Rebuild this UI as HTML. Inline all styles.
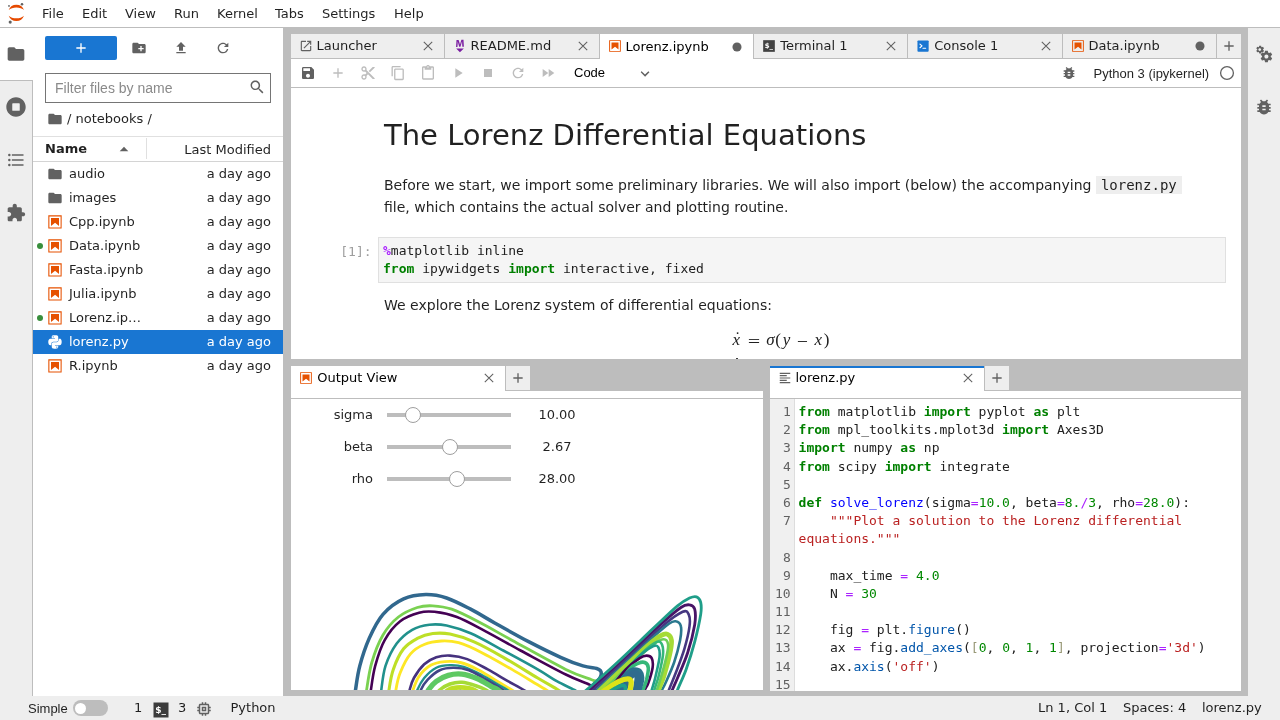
<!DOCTYPE html>
<html lang="en">
<head>
<meta charset="utf-8">
<title>JupyterLab</title>
<style>
*{box-sizing:border-box;margin:0;padding:0}
html,body{width:1280px;height:720px;overflow:hidden;background:#fff}
body{font-family:"DejaVu Sans","Liberation Sans",sans-serif;font-size:13px;color:rgba(0,0,0,.87);position:relative}
.abs{position:absolute}
.arial{font-family:"Liberation Sans",sans-serif}
.mono{font-family:"DejaVu Sans Mono","Liberation Mono",monospace}
svg{display:block;position:absolute}
/* menu */
#menubar{left:0;top:0;width:1280px;height:28px;background:#fff;border-bottom:1px solid #bdbdbd}
#menubar span{position:absolute;top:0;line-height:27px;font-size:13px;white-space:nowrap}
/* sidebars */
#lside{left:0;top:28px;width:33px;height:668px;background:#eee;border-right:1px solid #bdbdbd}
#lside .act{position:absolute;left:0;top:0;width:33px;height:53px;background:#fff;border-bottom:1px solid #bdbdbd}
#rside{left:1247px;top:28px;width:33px;height:668px;background:#eee;border-left:1px solid #bdbdbd}
/* file browser */
#fb{left:33px;top:28px;width:250px;height:668px;background:#fff}
.row{position:absolute;left:0;width:250px;height:24px;line-height:24px;font-size:13px;white-space:nowrap}
.row .nm{position:absolute;left:36px;top:0}
.row .md{position:absolute;right:12px;top:0}
.row.sel{background:#1976d2;color:#fff}
.dot{position:absolute;left:4.300px;top:9px;width:6px;height:6px;border-radius:50%;background:#388e3c}
/* dock */
#dock{left:283px;top:28px;width:964px;height:668px;background:#bdbdbd}
.panel{background:#fff}
.tabbar{background:#bdbdbd}
.tab{position:absolute;top:0;height:24px;background:#eee;border-left:1px solid #bdbdbd;border-right:1px solid #bdbdbd;line-height:22px;font-size:13px;white-space:nowrap}
.tab.cur{background:#fff;height:25px;color:#000}
.tab .lbl{position:absolute;left:25.5px;top:1px}
.tab.cur .lbl{top:2px}
.mdp{font-size:14px;line-height:22px;color:rgba(0,0,0,.87)}
.mdp code{font-family:"DejaVu Sans Mono","Liberation Mono",monospace;font-size:14px;background:#eee;padding:1px 5px}
.ed{font-size:13px;line-height:18.2px;color:#212121}
.gut{left:0;top:0;width:25px;height:292px;background:#f0f0f0;border-right:1px solid #ddd;padding:4px 3.300px 0 0;text-align:right;color:#616161}
.code{left:28.600px;top:0;padding-top:4px;white-space:pre}
.k{color:#008000}.o{color:#a2f}.n{color:#080}.s{color:#ba2121}.p{color:#05a}.d{color:#00f}.b{color:#997}
/* status */
#status{left:0;top:696px;width:1280px;height:24px;background:#eee}
#status span{position:absolute;top:0;line-height:23px;font-size:13px;white-space:nowrap}
</style>
</head>
<body>
<div id="root" class="abs" style="left:0;top:0;width:1280px;height:720px;will-change:transform">
<div id="menubar" class="abs">
<svg style="left:0;top:0" width="34" height="28" viewBox="0 0 34 28"><g fill="#e64a00"><path d="M8.700 10A8.200 8.200 0 0 1 24 10A9 5.300 0 0 0 8.700 10z"/><path d="M8.700 15.800A8.200 8.200 0 0 0 24 15.800A9 5.300 0 0 1 8.700 15.800z"/></g><g fill="#616161"><circle cx="22" cy="4.200" r="1.250"/><circle cx="9" cy="5.900" r=".9"/><circle cx="10.200" cy="22.100" r="1.550"/></g></svg>
<span style="left:42px">File</span><span style="left:82px">Edit</span><span style="left:125px">View</span><span style="left:174px">Run</span><span style="left:217px">Kernel</span><span style="left:275px">Tabs</span><span style="left:322px">Settings</span><span style="left:394px">Help</span>
</div>
<div id="lside" class="abs"><div class="act"></div>
<svg style="left:6px;top:16px" width="20" height="20" viewBox="0 0 24 24" fill="#616161"><path d="M10 4H4c-1.100 0-1.990.9-1.990 2L2 18c0 1.100.9 2 2 2h16c1.100 0 2-.9 2-2V8c0-1.100-.9-2-2-2h-8l-2-2z"/></svg>
<svg style="left:6px;top:69px" width="20" height="20" viewBox="0 0 512 512" fill="#616161"><path d="M256 8C119 8 8 119 8 256s111 248 248 248 248-111 248-248S393 8 256 8zm96 328c0 8.800-7.200 16-16 16H176c-8.800 0-16-7.200-16-16V176c0-8.800 7.200-16 16-16h160c8.800 0 16 7.200 16 16v160z"/></svg>
<svg style="left:6px;top:122px" width="20" height="20" viewBox="0 0 24 24" fill="#616161"><path d="M7 5h14v2H7V5m0 8v-2h14v2H7M4 4.500A1.500 1.500 0 0 1 5.500 6 1.500 1.500 0 0 1 4 7.500 1.500 1.500 0 0 1 2.500 6 1.500 1.500 0 0 1 4 4.500m0 6A1.500 1.500 0 0 1 5.500 12 1.500 1.500 0 0 1 4 13.500 1.500 1.500 0 0 1 2.500 12 1.500 1.500 0 0 1 4 10.500M7 19v-2h14v2H7m-3-2.500A1.500 1.500 0 0 1 5.500 18 1.500 1.500 0 0 1 4 19.500 1.500 1.500 0 0 1 2.500 18 1.500 1.500 0 0 1 4 16.500z"/></svg>
<svg style="left:6px;top:175px" width="20" height="20" viewBox="0 0 24 24" fill="#616161"><path d="M20.500 11H19V7c0-1.100-.9-2-2-2h-4V3.500C13 2.120 11.880 1 10.500 1S8 2.120 8 3.500V5H4c-1.100 0-1.990.9-1.990 2v3.800H3.500c1.490 0 2.700 1.210 2.700 2.700s-1.210 2.700-2.700 2.700H2V20c0 1.100.9 2 2 2h3.800v-1.500c0-1.490 1.210-2.700 2.700-2.700 1.490 0 2.700 1.210 2.700 2.700V22H17c1.100 0 2-.9 2-2v-4h1.500c1.380 0 2.500-1.120 2.500-2.500S21.880 11 20.500 11z"/></svg>
</div>
<div id="rside" class="abs">
<svg style="left:6.200px;top:16px" width="20" height="20" viewBox="0 0 24 24" fill="#616161"><path d="M14.900 17.450c1.350 0 2.450-1.100 2.450-2.450s-1.100-2.450-2.450-2.450c-1.360 0-2.450 1.100-2.450 2.450s1.090 2.450 2.450 2.450m5.200-1.770l1.480 1.160c.13.110.17.290.08.450l-1.400 2.420c-.09.150-.26.210-.43.150l-1.740-.7c-.36.280-.76.510-1.180.69l-.27 1.850c-.02.170-.17.300-.34.300h-2.800c-.18 0-.32-.13-.35-.30l-.26-1.850c-.43-.18-.82-.41-1.180-.69l-1.750.7c-.15.060-.34 0-.42-.15l-1.400-2.420c-.09-.16-.05-.34.080-.45l1.480-1.160-.05-.68.05-.69-1.480-1.150c-.13-.11-.17-.30-.08-.45l1.400-2.420c.08-.16.270-.22.420-.16l1.750.71c.36-.28.750-.52 1.180-.69l.26-1.860c.03-.16.170-.29.350-.29h2.800c.17 0 .32.13.34.29l.27 1.860c.42.17.82.41 1.180.69l1.740-.71c.17-.06.340 0 .43.160l1.400 2.420c.09.150.05.340-.08.450l-1.480 1.150.05.690-.05.680"/><path transform="translate(6.900 6.700) scale(1.200) translate(-5.940 -7.440)" d="M7.320 7.440c0-.76-.62-1.380-1.380-1.380s-1.380.62-1.380 1.380.62 1.370 1.380 1.370 1.380-.61 1.380-1.370m1.940.39l.83.65c.07.06.10.16.05.25l-.79 1.360c-.05.08-.15.12-.24.08l-.98-.39c-.20.16-.43.29-.66.39l-.15 1.040c-.02.10-.10.17-.20.17H5.550c-.10 0-.18-.07-.20-.17l-.15-1.040c-.24-.10-.46-.23-.66-.39l-.98.39c-.09.04-.19 0-.24-.08l-.78-1.360c-.05-.09-.03-.19.04-.25l.83-.65-.03-.39.03-.38-.83-.65c-.07-.06-.09-.17-.04-.25l.78-1.360c.05-.09.15-.12.24-.09l.98.40c.20-.16.42-.30.66-.40l.15-1.040c.02-.09.10-.17.20-.17h1.570c.10 0 .18.08.20.17l.15 1.040c.23.10.46.24.66.40l.98-.40c.09-.03.19 0 .24.09l.79 1.360c.05.08.02.19-.05.25l-.83.65.03.38-.03.39z"/></svg>
<svg style="left:6px;top:69px" width="20" height="20" viewBox="0 0 24 24" fill="#616161"><path d="M20 8h-2.810c-.45-.78-1.070-1.450-1.820-1.960L17 4.410 15.590 3l-2.170 2.170C12.960 5.060 12.490 5 12 5c-.49 0-.96.06-1.410.17L8.410 3 7 4.410l1.620 1.630C7.880 6.550 7.260 7.220 6.810 8H4v2h2.090c-.05.33-.09.66-.09 1v1H4v2h2v1c0 .34.040.67.090 1H4v2h2.810c1.040 1.790 2.970 3 5.190 3s4.150-1.210 5.190-3H20v-2h-2.090c.05-.33.09-.66.09-1v-1h2v-2h-2v-1c0-.34-.04-.67-.09-1H20V8zm-6 8h-4v-2h4v2zm0-4h-4v-2h4v2z"/></svg>
</div>
<div id="fb" class="abs">
<div class="abs" style="left:12px;top:8px;width:72px;height:24px;background:#1976d2;border-radius:2px"><svg style="left:28px;top:4px" width="16" height="16" viewBox="0 0 24 24" fill="#fff"><path d="M19 13h-6v6h-2v-6H5v-2h6V5h2v6h6v2z"/></svg></div>
<svg style="left:98px;top:12px" width="16" height="16" viewBox="0 0 24 24" fill="#616161"><path d="M20 6h-8l-2-2H4c-1.110 0-1.990.89-1.990 2L2 18c0 1.110.89 2 2 2h16c1.110 0 2-.89 2-2V8c0-1.110-.89-2-2-2zm-1 8h-3v3h-2v-3h-3v-2h3V9h2v3h3v2z"/></svg>
<svg style="left:140px;top:12px" width="16" height="16" viewBox="0 0 24 24" fill="#616161"><path d="M9 16h6v-6h4l-7-7-7 7h4zm-4 2h14v2H5z"/></svg>
<svg style="left:182px;top:12px" width="16" height="16" viewBox="0 0 18 18" fill="#616161"><path d="M9 13.500c-2.490 0-4.500-2.010-4.500-4.500S6.510 4.500 9 4.500c1.240 0 2.360.52 3.170 1.330L10 8h5V3l-1.760 1.760C12.150 3.680 10.660 3 9 3 5.690 3 3.010 5.690 3.010 9S5.690 15 9 15c2.970 0 5.430-2.160 5.900-5h-1.520c-.46 2-2.240 3.500-4.380 3.500z"/></svg>
<div class="abs" style="left:12px;top:45px;width:226px;height:30px;border:1px solid #757575;background:#fff"><span class="arial" style="position:absolute;left:9px;top:0;line-height:28px;font-size:14px;color:#8a8a8a">Filter files by name</span><svg style="left:203px;top:5px" width="16" height="16" viewBox="0 0 18 18" fill="#616161"><path d="M12.100 10.900h-.7l-.2-.2c.8-.9 1.300-2.200 1.300-3.500 0-3-2.400-5.400-5.400-5.400S1.800 4.200 1.800 7.100s2.400 5.400 5.400 5.400c1.300 0 2.500-.5 3.500-1.300l.2.2v.7l4.100 4.100 1.200-1.200-4.100-4.100zm-5 0c-2.100 0-3.700-1.700-3.700-3.700s1.700-3.700 3.700-3.700 3.700 1.700 3.700 3.700-1.600 3.700-3.700 3.700z"/></svg></div>
<svg style="left:14px;top:83px" width="16" height="16" viewBox="0 0 24 24" fill="#616161"><path d="M10 4H4c-1.100 0-1.990.9-1.990 2L2 18c0 1.100.9 2 2 2h16c1.100 0 2-.9 2-2V8c0-1.100-.9-2-2-2h-8l-2-2z"/></svg>
<span class="abs" style="left:34px;top:79px;line-height:24px;font-size:13px;white-space:nowrap">/ notebooks /</span>
<div class="abs" style="left:0;top:108px;width:250px;height:26px;border-top:1px solid #e0e0e0;border-bottom:1px solid #d4d4d4"></div>
<span class="abs" style="left:12px;top:109px;line-height:24px;font-size:13px;font-weight:bold">Name</span>
<svg style="left:82px;top:112px" width="18" height="18" viewBox="0 0 18 18" fill="#616161"><path d="M4.700 11.200L9 6.800l4.300 4.400z"/></svg>
<div class="abs" style="left:113px;top:110px;width:1px;height:21px;background:#e0e0e0"></div>
<span class="abs" style="right:12px;top:110px;line-height:24px;font-size:13px">Last Modified</span>
<div class="row" style="top:134px"><svg style="left:13.5px;top:4px" width="16" height="16" viewBox="0 0 24 24" fill="#616161"><path d="M10 4H4c-1.100 0-1.990.9-1.990 2L2 18c0 1.100.9 2 2 2h16c1.100 0 2-.9 2-2V8c0-1.100-.9-2-2-2h-8l-2-2z"/></svg><span class="nm">audio</span><span class="md">a day ago</span></div>
<div class="row" style="top:158px"><svg style="left:13.5px;top:4px" width="16" height="16" viewBox="0 0 24 24" fill="#616161"><path d="M10 4H4c-1.100 0-1.990.9-1.990 2L2 18c0 1.100.9 2 2 2h16c1.100 0 2-.9 2-2V8c0-1.100-.9-2-2-2h-8l-2-2z"/></svg><span class="nm">images</span><span class="md">a day ago</span></div>
<div class="row" style="top:182px"><svg style="left:13.5px;top:4px" width="16" height="16" viewBox="0 0 22 22" fill="#e65100"><path d="M18.700 3.300v15.400H3.300V3.300h15.400m1.500-1.500H1.800v18.300h18.300l.1-18.300z"/><path d="M16.500 16.500l-5.400-4.300-5.600 4.300v-11h11z"/></svg><span class="nm">Cpp.ipynb</span><span class="md">a day ago</span></div>
<div class="row" style="top:206px"><i class=dot></i><svg style="left:13.5px;top:4px" width="16" height="16" viewBox="0 0 22 22" fill="#e65100"><path d="M18.700 3.300v15.400H3.300V3.300h15.400m1.500-1.500H1.800v18.300h18.300l.1-18.300z"/><path d="M16.500 16.500l-5.400-4.300-5.600 4.300v-11h11z"/></svg><span class="nm">Data.ipynb</span><span class="md">a day ago</span></div>
<div class="row" style="top:230px"><svg style="left:13.5px;top:4px" width="16" height="16" viewBox="0 0 22 22" fill="#e65100"><path d="M18.700 3.300v15.400H3.300V3.300h15.400m1.500-1.500H1.800v18.300h18.300l.1-18.300z"/><path d="M16.500 16.500l-5.400-4.300-5.600 4.300v-11h11z"/></svg><span class="nm">Fasta.ipynb</span><span class="md">a day ago</span></div>
<div class="row" style="top:254px"><svg style="left:13.5px;top:4px" width="16" height="16" viewBox="0 0 22 22" fill="#e65100"><path d="M18.700 3.300v15.400H3.300V3.300h15.400m1.500-1.500H1.800v18.300h18.300l.1-18.300z"/><path d="M16.500 16.500l-5.400-4.300-5.600 4.300v-11h11z"/></svg><span class="nm">Julia.ipynb</span><span class="md">a day ago</span></div>
<div class="row" style="top:278px"><i class=dot></i><svg style="left:13.5px;top:4px" width="16" height="16" viewBox="0 0 22 22" fill="#e65100"><path d="M18.700 3.300v15.400H3.300V3.300h15.400m1.500-1.500H1.800v18.300h18.300l.1-18.300z"/><path d="M16.500 16.500l-5.400-4.300-5.600 4.300v-11h11z"/></svg><span class="nm">Lorenz.ip…</span><span class="md">a day ago</span></div>
<div class="row sel" style="top:302px"><svg style="left:13.5px;top:4px" width="16" height="16" viewBox="-10 -10 131.161 132.389" fill="#fff"><path d="M54.919 0C50.335.022 45.958.413 42.106 1.095 30.760 3.099 28.700 7.295 28.700 15.032v10.219h26.813v3.406H18.638c-7.793 0-14.616 4.684-16.750 13.594-2.462 10.213-2.571 16.586 0 27.250 1.906 7.938 6.458 13.594 14.250 13.594h9.219v-12.250c0-8.850 7.657-16.656 16.750-16.656h26.781c7.455 0 13.406-6.138 13.406-13.625V15.032c0-7.266-6.130-12.725-13.406-13.937C64.282.328 59.502-.020 54.919 0zm-14.500 8.220c2.770 0 5.031 2.299 5.031 5.125 0 2.816-2.262 5.094-5.031 5.094-2.780 0-5.031-2.277-5.031-5.094 0-2.826 2.252-5.125 5.031-5.125z"/><path d="M85.638 28.657v11.906c0 9.231-7.826 17-16.750 17H42.106c-7.336 0-13.406 6.278-13.406 13.625v25.531c0 7.266 6.319 11.540 13.406 13.625 8.487 2.496 16.626 2.947 26.781 0 6.750-1.954 13.406-5.888 13.406-13.625V86.501H55.513v-3.406h40.188c7.793 0 10.696-5.435 13.406-13.594 2.799-8.399 2.680-16.476 0-27.250-1.926-7.757-5.604-13.594-13.406-13.594zM70.575 93.313c2.780 0 5.031 2.277 5.031 5.094 0 2.826-2.252 5.125-5.031 5.125-2.770 0-5.031-2.299-5.031-5.125 0-2.816 2.262-5.094 5.031-5.094z"/></svg><span class="nm">lorenz.py</span><span class="md">a day ago</span></div>
<div class="row" style="top:326px"><svg style="left:13.5px;top:4px" width="16" height="16" viewBox="0 0 22 22" fill="#e65100"><path d="M18.700 3.300v15.400H3.300V3.300h15.400m1.500-1.500H1.800v18.300h18.300l.1-18.300z"/><path d="M16.500 16.500l-5.400-4.300-5.600 4.300v-11h11z"/></svg><span class="nm">R.ipynb</span><span class="md">a day ago</span></div>
</div>
<div id="dock" class="abs">
<div class="abs tabbar" style="left:8px;top:6px;width:950px;height:25px;border-bottom:1px solid #bdbdbd">
<div class="tab" style="left:-1px;width:155px"><svg style="left:8px;top:5px" width="14" height="14" viewBox="0 0 24 24" fill="#616161"><path d="M19 19H5V5h7V3H5c-1.110 0-2 .9-2 2v14c0 1.100.89 2 2 2h14c1.100 0 2-.9 2-2v-7h-2v7zM14 3v2h3.590l-9.830 9.830 1.410 1.410L19 6.410V10h2V3h-7z"/></svg><span class="lbl">Launcher</span><svg style="left:auto;right:8px;top:4px" width="16" height="16" viewBox="0 0 24 24"><path d="M5.700 5.700l12.600 12.600m0-12.600L5.700 18.300" stroke="#616161" stroke-width="1.600" fill="none"/></svg></div>
<div class="tab" style="left:153px;width:156px"><svg style="left:8px;top:5px" width="14" height="14" viewBox="0 0 22 22" fill="#7b1fa2"><path d="M5 14.900h12l-6.100 6zm9.400-6.800c0-1.300-.1-2.900-.1-4.500-.4 1.400-.9 2.900-1.300 4.300l-1.300 4.300h-2L8.500 7.900c-.4-1.300-.7-2.900-1-4.300-.1 1.600-.1 3.200-.2 4.600L7 12.400H4.800l.7-11h3.300L10 5c.4 1.200.7 2.700 1 3.900.3-1.200.7-2.600 1-3.900l1.200-3.700h3.300l.6 11h-2.400l-.3-4.200z"/></svg><span class="lbl">README.md</span><svg style="left:auto;right:8px;top:4px" width="16" height="16" viewBox="0 0 24 24"><path d="M5.700 5.700l12.600 12.600m0-12.600L5.700 18.300" stroke="#616161" stroke-width="1.600" fill="none"/></svg></div>
<div class="tab cur" style="left:308px;width:155px"><svg style="left:8px;top:5px" width="14" height="14" viewBox="0 0 22 22" fill="#e65100"><path d="M18.700 3.300v15.400H3.300V3.300h15.400m1.500-1.500H1.800v18.300h18.300l.1-18.300z"/><path d="M16.500 16.500l-5.400-4.300-5.600 4.300v-11h11z"/></svg><span class="lbl">Lorenz.ipynb</span><svg style="left:auto;right:8px;top:4.5px" width="16" height="16" viewBox="0 0 24 24"><circle cx="12" cy="12" r="6.800" fill="#616161"/></svg></div>
<div class="tab" style="left:462px;width:155px"><svg style="left:8px;top:5px" width="14" height="14" viewBox="0 0 24 24"><rect x="2" y="2" width="20" height="20" fill="#424242"/><text x="4.500" y="16" font-family="DejaVu Sans,sans-serif" font-size="12" font-weight="bold" fill="#fff">$_</text></svg><span class="lbl" style="left:26.200px">Terminal 1</span><svg style="left:auto;right:8px;top:4px" width="16" height="16" viewBox="0 0 24 24"><path d="M5.700 5.700l12.600 12.600m0-12.600L5.700 18.300" stroke="#616161" stroke-width="1.600" fill="none"/></svg></div>
<div class="tab" style="left:616px;width:156px"><svg style="left:8px;top:5px" width="14" height="14" viewBox="0 0 24 24"><rect x="2.500" y="2.500" width="19.200" height="19.200" rx="1.500" fill="#1976d2"/><path d="M6.800 8.700l3.500 3.100-3.500 3.100M12 15.800h4.500" stroke="#fff" stroke-width="2" stroke-linecap="round" stroke-linejoin="round" fill="none"/></svg><span class="lbl" style="left:26.200px">Console 1</span><svg style="left:auto;right:8px;top:4px" width="16" height="16" viewBox="0 0 24 24"><path d="M5.700 5.700l12.600 12.600m0-12.600L5.700 18.300" stroke="#616161" stroke-width="1.600" fill="none"/></svg></div>
<div class="tab" style="left:771px;width:155px"><svg style="left:8px;top:5px" width="14" height="14" viewBox="0 0 22 22" fill="#e65100"><path d="M18.700 3.300v15.400H3.300V3.300h15.400m1.500-1.500H1.800v18.300h18.300l.1-18.300z"/><path d="M16.500 16.500l-5.400-4.300-5.600 4.300v-11h11z"/></svg><span class="lbl">Data.ipynb</span><svg style="left:auto;right:8px;top:4px" width="16" height="16" viewBox="0 0 24 24"><circle cx="12" cy="12" r="6.800" fill="#616161"/></svg></div>
<div class="tab" style="left:925px;width:25px;border-right:none"><svg style="left:3.500px;top:4px" width="16" height="16" viewBox="0 0 24 24" fill="#616161"><path d="M19 13h-6v6h-2v-6H5v-2h6V5h2v6h6v2z"/></svg></div>
</div>
<div class="abs panel" style="left:8px;top:31px;width:950px;height:300px;overflow:hidden">
<div class="abs" style="left:0;top:0;width:950px;height:29px;border-bottom:1px solid #bdbdbd">
<svg style="left:9.0px;top:5.500px" width="16" height="16" viewBox="0 0 24 24" fill="#616161"><path d="M17 3H5c-1.110 0-2 .9-2 2v14c0 1.100.89 2 2 2h14c1.100 0 2-.9 2-2V7l-4-4zm-5 16c-1.660 0-3-1.340-3-3s1.340-3 3-3 3 1.340 3 3-1.340 3-3 3zm3-10H5V5h10v4z"/></svg><svg style="left:39.0px;top:5.500px" width="16" height="16" viewBox="0 0 24 24" fill="#bdbdbd"><path d="M19 13h-6v6h-2v-6H5v-2h6V5h2v6h6v2z"/></svg><svg style="left:69.0px;top:5.500px" width="16" height="16" viewBox="0 0 24 24" fill="#bdbdbd"><path d="M9.640 7.640c.23-.5.36-1.050.36-1.640 0-2.210-1.790-4-4-4S2 3.790 2 6s1.790 4 4 4c.59 0 1.140-.13 1.640-.36L10 12l-2.360 2.360C7.140 14.130 6.590 14 6 14c-2.210 0-4 1.790-4 4s1.790 4 4 4 4-1.790 4-4c0-.59-.13-1.140-.36-1.640L12 14l7 7h3v-1L9.640 7.640zM6 8c-1.100 0-2-.89-2-2s.9-2 2-2 2 .89 2 2-.9 2-2 2zm0 12c-1.100 0-2-.89-2-2s.9-2 2-2 2 .89 2 2-.9 2-2 2zm6-7.500c-.28 0-.5-.22-.5-.5s.22-.5.5-.5.500.22.500.5-.22.5-.5.5zM19 3l-6 6 2 2 7-7V3z"/></svg><svg style="left:99.0px;top:5.500px" width="16" height="16" viewBox="0 0 18 18" fill="#bdbdbd"><path d="M11.900 1H3.200c-.8 0-1.500.7-1.500 1.500v10.200h1.500V2.500h8.700V1zm2.200 2.900h-8c-.8 0-1.500.7-1.500 1.500v10.200c0 .8.700 1.500 1.500 1.500h8c.8 0 1.500-.7 1.500-1.500V5.400c-.1-.8-.7-1.500-1.500-1.500zm0 11.600h-8V5.400h8v10.100z"/></svg><svg style="left:129.0px;top:5.500px" width="16" height="16" viewBox="0 0 24 24" fill="#bdbdbd"><path d="M19 2h-4.180C14.400.84 13.300 0 12 0c-1.300 0-2.400.84-2.820 2H5c-1.100 0-2 .9-2 2v16c0 1.100.9 2 2 2h14c1.100 0 2-.9 2-2V4c0-1.100-.9-2-2-2zm-7 0c.55 0 1 .45 1 1s-.45 1-1 1-1-.45-1-1 .45-1 1-1zm7 18H5V4h2v3h10V4h2v16z"/></svg><svg style="left:159.0px;top:5.500px" width="16" height="16" viewBox="0 0 24 24" fill="#bdbdbd"><path d="M8 5v14l11-7z"/></svg><svg style="left:189.0px;top:5.500px" width="16" height="16" viewBox="0 0 24 24" fill="#bdbdbd"><path d="M6 6h12v12H6z"/></svg><svg style="left:219.0px;top:5.500px" width="16" height="16" viewBox="0 0 18 18" fill="#bdbdbd"><path d="M9 13.500c-2.490 0-4.500-2.010-4.500-4.500S6.510 4.500 9 4.500c1.240 0 2.360.52 3.170 1.330L10 8h5V3l-1.760 1.760C12.150 3.680 10.660 3 9 3 5.690 3 3.010 5.690 3.010 9S5.690 15 9 15c2.970 0 5.430-2.160 5.900-5h-1.520c-.46 2-2.240 3.500-4.380 3.500z"/></svg><svg style="left:249.0px;top:5.500px" width="16" height="16" viewBox="0 0 24 24" fill="#bdbdbd"><path d="M4 18l8.500-6L4 6v12zm9-12v12l8.500-6L13 6z"/></svg>
<span class="abs arial" style="left:283px;top:0;line-height:28px;font-size:13px;color:#000">Code</span>
<svg style="left:346px;top:6.600px" width="16" height="16" viewBox="0 0 18 18" fill="#616161"><path d="M5.200 5.900L9 9.700l3.800-3.800 1.200 1.200-4.900 5-4.900-5 .8-1.200z"/></svg>
<svg style="left:770.0px;top:5.500px" width="16" height="16" viewBox="0 0 24 24" fill="#616161"><path d="M20 8h-2.810c-.45-.78-1.070-1.450-1.820-1.960L17 4.410 15.590 3l-2.170 2.170C12.960 5.060 12.490 5 12 5c-.49 0-.96.06-1.410.17L8.410 3 7 4.410l1.620 1.630C7.880 6.550 7.260 7.220 6.810 8H4v2h2.090c-.05.33-.09.66-.09 1v1H4v2h2v1c0 .34.040.67.090 1H4v2h2.810c1.040 1.790 2.970 3 5.190 3s4.150-1.210 5.190-3H20v-2h-2.090c.05-.33.09-.66.090-1v-1h2v-2h-2v-1c0-.34-.04-.67-.09-1H20V8zm-6 8h-4v-2h4v2zm0-4h-4v-2h4v2z"/></svg>
<span class="abs arial" style="left:802.500px;top:1px;line-height:28px;font-size:13px;color:rgba(0,0,0,.87)">Python 3 (ipykernel)</span>
<svg style="left:928px;top:5.600px" width="16" height="16" viewBox="0 0 16 16"><circle cx="8" cy="8" r="6.400" fill="none" stroke="#616161" stroke-width="1.300"/></svg>
</div>
<div id="nb" class="abs" style="left:0;top:29px;width:950px;height:271px">
<h1 class="abs" style="left:93px;top:29px;font-size:29.030px;font-weight:normal;line-height:36px;white-space:nowrap;color:rgba(0,0,0,.87)">The Lorenz Differential Equations</h1>
<p class="abs mdp" style="left:93px;top:86px;width:845px">Before we start, we import some preliminary libraries. We will also import (below) the accompanying <code>lorenz.py</code><br><span style="position:relative;top:-.400px">file, which contains the actual solver and plotting routine.</span></p>
<span class="abs mono" style="left:49.300px;top:155px;font-size:13px;line-height:18.200px;color:#9e9e9e">[1]:</span>
<div class="abs mono" style="left:87px;top:149px;width:848px;height:46px;background:#f5f5f5;border:1px solid #e0e0e0;font-size:13px;line-height:18.200px;padding:4px 0 0 4px;white-space:pre;color:#212121"><b style="color:#a2f">%</b>matplotlib inline
<b style="color:#008000">from</b> ipywidgets <b style="color:#008000">import</b> interactive, fixed</div>
<p class="abs mdp" style="left:93px;top:206px;width:845px">We explore the Lorenz system of differential equations:</p>
<div class="abs" style="left:0;top:240px;width:950px;height:30px;font-family:'Liberation Serif',serif;font-size:17px;line-height:24px;white-space:nowrap;color:#212121"><span style="position:absolute;left:441.50px;top:0;font-style:italic;">x</span><span style="position:absolute;left:443.80px;top:-2px;">&#729;</span><span style="position:absolute;left:457.30px;top:1.700px;-webkit-text-stroke:.25px #212121;transform:scaleX(1.25);transform-origin:0 0;">=</span><span style="position:absolute;left:475.20px;top:0;font-style:italic;">&#963;</span><span style="position:absolute;left:484.20px;top:0;">(</span><span style="position:absolute;left:491.70px;top:0;font-style:italic;">y</span><span style="position:absolute;left:505.90px;top:1.500px;-webkit-text-stroke:.25px #212121;transform:scaleX(1.12);transform-origin:0 0;">&#8722;</span><span style="position:absolute;left:523.50px;top:0;font-style:italic;">x</span><span style="position:absolute;left:532.80px;top:0;">)</span><span style="position:absolute;left:445.400px;top:29.500px;width:1.400px;height:1.400px;border-radius:50%;background:#212121"></span></div>
</div>
</div>
<div class="abs tabbar" style="left:8px;top:338px;width:472px;height:25px">
<div class="tab cur" style="left:-1px;width:216px"><svg style="left:8px;top:5px" width="14" height="14" viewBox="0 0 22 22" fill="#e65100"><path d="M18.700 3.300v15.400H3.300V3.300h15.400m1.500-1.500H1.800v18.300h18.300l.1-18.300z"/><path d="M16.500 16.500l-5.400-4.300-5.600 4.300v-11h11z"/></svg><span class="lbl" style="top:1px;left:26.300px">Output View</span><svg style="left:auto;right:8px;top:4px" width="16" height="16" viewBox="0 0 24 24"><path d="M5.700 5.700l12.600 12.600m0-12.600L5.700 18.300" stroke="#616161" stroke-width="1.600" fill="none"/></svg></div>
<div class="tab" style="left:214px;width:25px;border-right:none"><svg style="left:3.500px;top:4px" width="16" height="16" viewBox="0 0 24 24" fill="#616161"><path d="M19 13h-6v6h-2v-6H5v-2h6V5h2v6h6v2z"/></svg></div>
</div>
<div class="abs panel" style="left:8px;top:363px;width:472px;height:299px;overflow:hidden">
<div class="abs" style="left:0;top:7px;width:472px;height:1px;background:#bdbdbd"></div>
<div class="abs" style="left:0;top:8px;width:472px;height:291px;overflow:hidden">
<svg style="left:0;top:0" width="472" height="291" viewBox="291 399 472 291" fill="none" stroke-linecap="round" stroke-linejoin="round"><path d="M354.1 700.3C354.3 698.6 354.5 695.7 355.5 690.0C356.4 684.3 357.5 674.5 359.8 665.9C362.1 657.3 365.4 647.0 369.2 638.4C373.1 629.8 377.2 621.0 383.0 614.4C388.7 607.8 396.4 602.2 403.6 598.9C410.8 595.6 418.8 594.8 425.9 594.6C433.1 594.5 439.1 595.6 446.6 598.0C454.0 600.5 462.6 605.1 470.6 609.2C478.7 613.4 485.0 617.5 494.7 623.0C504.4 628.4 518.1 636.1 529.1 641.9C540.1 647.6 551.6 653.3 560.6 657.3C569.6 661.4 577.0 664.1 583.0 665.9C589.0 667.8 593.8 667.7 596.7 668.5C599.6 669.3 599.8 669.8 600.5 670.8C601.2 671.8 601.4 673.2 601.2 674.5C601.0 675.9 600.3 677.4 599.3 678.8C598.3 680.3 596.6 681.3 595.0 683.1C593.4 685.0 590.7 688.9 589.8 690.0" stroke="#31688e" stroke-width="3.54"/><path d="M365.8 700.3C365.9 698.6 365.6 696.3 366.6 690.0C367.6 683.7 369.1 671.7 371.8 662.5C374.5 653.3 378.5 642.6 383.0 635.0C387.4 627.4 392.7 621.5 398.4 617.0C404.2 612.4 411.6 609.4 417.3 607.5C423.1 605.6 427.1 605.5 432.8 605.8C438.5 606.1 444.3 606.6 451.7 609.2C459.2 611.8 467.5 616.1 477.5 621.3C487.5 626.4 497.2 632.1 511.9 640.2C526.6 648.2 552.5 662.8 565.8 669.4C579.1 676.0 586.4 677.6 591.6 679.7C596.7 681.8 596.7 680.0 596.7 681.8C596.7 683.5 592.4 688.6 591.6 690.0" stroke="#7ad151" stroke-width="2.83"/><path d="M370.3 700.3C370.4 698.6 370.1 695.7 370.9 690.0C371.8 684.3 372.9 674.2 375.2 665.9C377.5 657.6 380.5 647.6 384.7 640.2C388.8 632.7 394.4 625.8 400.2 621.3C405.9 616.7 413.3 614.2 419.1 612.7C424.8 611.1 428.2 611.1 434.5 611.8C440.8 612.5 448.3 613.7 456.9 617.0C465.5 620.2 475.5 626.0 486.1 631.6C496.7 637.2 507.2 643.3 520.5 650.5C533.8 657.6 554.2 668.8 565.8 674.5C577.3 680.3 585.0 682.3 589.8 684.8C594.7 687.4 594.1 689.1 595.0 690.0" stroke="#440154" stroke-width="2.60"/><path d="M380.6 700.3C380.7 698.6 380.4 695.7 381.3 690.0C382.1 684.3 383.0 673.7 385.5 665.9C388.1 658.2 392.3 649.6 396.7 643.6C401.2 637.6 406.7 633.0 412.2 629.8C417.6 626.7 423.6 625.4 429.4 624.7C435.1 624.0 439.7 624.1 446.6 625.5C453.4 627.0 461.2 629.1 470.6 633.3C480.1 637.4 492.1 644.5 503.3 650.5C514.5 656.5 528.7 664.2 537.7 669.4C546.6 674.5 551.1 678.0 557.2 681.4C563.3 684.8 569.8 687.4 574.4 690.0C579.0 692.6 583.0 695.7 584.7 696.9" stroke="#21918c" stroke-width="2.60"/><path d="M388.1 700.3C388.3 698.6 388.1 695.2 389.0 690.0C389.8 684.8 390.8 676.3 393.3 669.4C395.7 662.5 399.6 653.9 403.6 648.8C407.6 643.6 412.5 641.0 417.3 638.4C422.2 635.9 427.4 634.3 432.8 633.6C438.3 632.9 443.1 632.8 450.0 634.1C456.9 635.5 465.2 638.0 474.1 641.9C482.9 645.7 492.7 651.3 503.3 657.3C513.9 663.4 528.5 672.5 537.7 678.0C546.8 683.4 552.6 686.6 558.3 690.0C564.0 693.4 569.7 697.2 572.0 698.6" stroke="#bddf26" stroke-width="3.07"/><path d="M395.0 700.3C395.1 698.6 395.0 694.6 395.9 690.0C396.7 685.4 397.7 678.8 400.2 672.8C402.6 666.8 406.5 658.6 410.5 653.9C414.5 649.2 419.1 646.6 424.2 644.5C429.4 642.3 435.7 641.3 441.4 641.0C447.1 640.7 452.0 640.9 458.6 642.7C465.2 644.6 472.1 647.7 480.9 652.2C489.8 656.6 502.4 663.9 511.9 669.4C521.3 674.8 531.9 681.4 537.7 684.8C543.4 688.3 542.5 687.7 546.3 690.0C550.0 692.3 557.7 697.2 560.0 698.6" stroke="#fde725" stroke-width="2.83"/><path d="M407.9 700.3C408.2 698.6 408.6 693.7 409.6 690.0C410.6 686.3 411.5 682.3 413.9 678.0C416.3 673.7 420.5 667.7 424.2 664.2C427.9 660.8 432.0 658.8 436.3 657.3C440.6 655.9 444.8 655.3 450.0 655.6C455.2 655.9 460.9 656.8 467.2 659.1C473.5 661.4 480.9 665.7 487.8 669.4C494.7 673.1 502.4 678.0 508.4 681.4C514.5 684.8 519.0 687.1 523.9 690.0C528.8 692.9 535.4 697.2 537.7 698.6" stroke="#46327e" stroke-width="2.60"/><path d="M410.5 700.3C410.9 698.6 411.6 694.0 413.0 690.0C414.5 686.0 416.1 680.4 419.1 676.3C422.1 672.1 426.8 667.5 431.1 665.1C435.4 662.6 440.0 662.1 444.8 661.6C449.7 661.2 454.9 661.2 460.3 662.5C465.8 663.8 471.8 666.5 477.5 669.4C483.2 672.2 489.0 676.3 494.7 679.7C500.4 683.1 506.7 686.9 511.9 690.0C517.0 693.2 523.3 697.2 525.6 698.6" stroke="#fde725" stroke-width="2.83"/><path d="M414.8 700.3C415.2 698.6 415.8 693.7 417.3 690.0C418.9 686.3 421.1 681.7 424.2 678.0C427.4 674.2 432.0 669.8 436.3 667.7C440.6 665.5 445.4 665.2 450.0 665.1C454.6 664.9 458.6 665.2 463.8 666.8C468.9 668.4 474.6 671.2 480.9 674.5C487.2 677.8 497.1 684.0 501.6 686.6C506.0 689.1 504.4 688.0 507.6 690.0C510.7 692.0 518.3 697.2 520.5 698.6" stroke="#21918c" stroke-width="2.36"/><path d="M418.2 700.3C418.6 698.6 419.2 693.4 420.8 690.0C422.4 686.6 424.5 683.0 427.7 679.7C430.8 676.4 435.4 672.2 439.7 670.2C444.0 668.2 448.6 667.7 453.4 667.7C458.3 667.7 463.5 668.2 468.9 670.2C474.4 672.2 480.4 676.4 486.1 679.7C491.8 683.0 498.4 686.9 503.3 690.0C508.2 693.2 513.3 697.2 515.3 698.6" stroke="#414487" stroke-width="2.60"/><path d="M424.2 700.3C424.9 698.6 426.5 693.2 428.5 690.0C430.5 686.9 433.0 683.8 436.3 681.4C439.5 679.0 444.0 676.6 448.3 675.4C452.6 674.2 457.2 673.6 462.0 674.2C466.9 674.8 472.6 676.8 477.5 678.8C482.4 680.9 487.8 684.7 491.3 686.6C494.7 688.4 495.3 688.0 498.1 690.0C501.0 692.0 506.7 697.2 508.4 698.6" stroke="#5ec962" stroke-width="5.31"/><path d="M432.8 700.3C434.0 698.6 436.8 692.7 439.7 690.0C442.6 687.3 446.3 685.3 450.0 684.0C453.7 682.7 457.7 682.0 462.0 682.3C466.3 682.6 471.8 684.4 475.8 685.7C479.8 687.0 482.4 687.9 486.1 690.0C489.8 692.2 496.1 697.2 498.1 698.6" stroke="#a5db36" stroke-width="3.54"/><path d="M439.7 698.6C441.1 697.2 444.8 691.9 448.3 690.0C451.7 688.1 456.0 687.4 460.3 687.4C464.6 687.4 469.8 688.1 474.1 690.0C478.4 691.9 484.1 697.2 486.1 698.6" stroke="#bddf26" stroke-width="4.72"/><path d="M450.0 700.3C451.7 698.7 456.9 690.9 460.3 690.9C463.8 690.9 468.9 698.7 470.6 700.3" stroke="#3b528b" stroke-width="2.36"/><path d="M579.5 700.3C581.3 698.6 582.7 696.6 589.8 690.0C597.0 683.4 610.8 671.7 622.5 660.8C634.2 649.9 650.6 633.6 660.3 624.7C670.1 615.8 676.1 610.8 680.9 607.5C685.8 604.2 687.2 604.6 689.5 604.9C691.8 605.2 693.8 605.9 694.7 609.2C695.6 612.5 695.8 617.5 694.7 624.7C693.5 631.9 690.7 643.3 687.8 652.2C685.0 661.1 680.1 671.7 677.5 678.0C674.9 684.3 673.8 686.3 672.3 690.0C670.9 693.7 669.5 698.6 668.9 700.3" stroke="#481567" stroke-width="2.83"/><path d="M583.0 700.3C584.7 698.6 586.1 696.7 593.3 690.0C600.4 683.3 614.2 670.8 625.9 659.9C637.7 649.1 654.3 633.1 663.8 625.0C673.2 617.0 678.5 613.6 682.7 611.8C686.8 610.0 687.5 611.9 688.7 614.4C689.8 616.8 690.3 620.7 689.5 626.4C688.8 632.1 686.7 641.0 684.4 648.8C682.1 656.5 678.4 665.9 675.8 672.8C673.2 679.7 670.6 685.4 668.9 690.0C667.2 694.6 666.0 698.6 665.5 700.3" stroke="#453781" stroke-width="2.60"/><path d="M586.4 700.3C588.1 698.6 590.1 696.3 596.7 690.0C603.3 683.7 616.8 671.1 625.9 662.5C635.1 653.9 644.6 644.9 651.7 638.4C658.9 632.0 664.9 626.7 668.9 623.8C672.9 621.0 673.8 620.8 675.8 621.3C677.8 621.7 680.2 623.3 680.9 626.4C681.7 629.6 681.2 634.1 680.1 640.2C678.9 646.2 676.5 655.3 674.1 662.5C671.6 669.7 667.5 678.5 665.5 683.1C663.5 687.7 663.2 687.1 662.0 690.0C660.9 692.9 659.2 698.6 658.6 700.3" stroke="#2a788e" stroke-width="2.60"/><path d="M589.8 700.3C591.6 698.6 593.6 696.3 600.2 690.0C606.7 683.7 621.1 670.2 629.4 662.5C637.7 654.8 644.8 648.0 650.0 643.6C655.2 639.2 657.5 637.4 660.3 635.9C663.2 634.3 665.3 633.4 667.2 634.1C669.1 634.9 671.1 636.9 671.5 640.2C671.9 643.5 671.1 647.9 669.8 653.9C668.5 659.9 665.6 670.2 663.8 676.3C661.9 682.3 660.0 686.0 658.6 690.0C657.2 694.0 655.7 698.6 655.2 700.3" stroke="#a5db36" stroke-width="4.72"/><path d="M593.3 700.3C595.0 698.6 597.0 696.3 603.6 690.0C610.2 683.7 624.5 670.1 632.8 662.5C641.1 654.9 648.3 648.3 653.4 644.5C658.6 640.6 661.3 639.3 663.8 639.3C666.2 639.3 667.6 641.4 668.1 644.5C668.5 647.5 667.6 651.5 666.3 657.3C665.0 663.2 661.9 674.2 660.3 679.7C658.7 685.1 658.0 686.6 656.9 690.0C655.7 693.4 654.0 698.6 653.4 700.3" stroke="#6ece58" stroke-width="2.60"/><path d="M596.7 700.3C598.4 698.6 599.3 698.0 607.0 690.0C614.8 682.0 634.8 660.2 643.1 652.2C651.4 644.2 653.7 643.2 656.9 641.9C660.0 640.6 661.0 642.2 662.0 644.5C663.0 646.7 663.5 650.3 662.9 655.6C662.3 660.9 660.0 670.5 658.6 676.3C657.2 682.0 655.4 686.0 654.3 690.0C653.2 694.0 652.2 698.6 651.7 700.3" stroke="#35b779" stroke-width="2.60"/><path d="M600.2 700.3C601.9 698.6 604.5 696.9 610.5 690.0C616.5 683.1 629.1 666.4 636.3 659.1C643.4 651.8 649.7 648.0 653.4 646.2C657.2 644.3 657.6 646.0 658.6 647.9C659.6 649.8 660.0 652.3 659.5 657.3C658.9 662.4 656.4 672.5 655.2 678.0C653.9 683.4 652.7 686.3 651.7 690.0C650.7 693.7 649.6 698.6 649.1 700.3" stroke="#1f9e89" stroke-width="2.60"/><path d="M598.4 700.3C600.2 698.6 604.2 695.2 608.8 690.0C613.3 684.8 620.8 674.7 625.9 669.4C631.1 664.1 636.3 660.5 639.7 658.2C643.1 655.9 644.6 655.6 646.6 655.6C648.6 655.6 650.7 656.2 651.7 658.2C652.7 660.2 653.2 663.5 652.6 667.7C652.0 671.8 649.6 679.4 648.3 683.1C647.0 686.9 645.8 687.1 644.8 690.0C643.8 692.9 642.7 698.6 642.3 700.3" stroke="#440154" stroke-width="2.60"/><path d="M607.0 700.3C608.5 698.6 611.9 695.2 615.6 690.0C619.4 684.8 625.7 673.8 629.4 669.4C633.1 664.9 635.4 664.5 638.0 663.4C640.6 662.2 643.1 661.8 644.8 662.5C646.6 663.2 648.0 664.8 648.3 667.7C648.6 670.5 647.4 676.0 646.6 679.7C645.7 683.4 644.1 686.6 643.1 690.0C642.1 693.4 641.0 698.6 640.6 700.3" stroke="#35b779" stroke-width="3.54"/><path d="M613.9 700.3C615.1 697.5 618.5 687.6 620.8 683.1C623.1 678.7 625.5 675.8 627.7 673.7C629.8 671.5 631.7 670.5 633.7 670.2C635.7 670.0 638.4 670.5 639.7 672.0C641.0 673.4 641.6 675.8 641.4 678.8C641.3 681.8 639.5 686.4 638.8 690.0C638.1 693.6 637.4 698.6 637.1 700.3" stroke="#2c728e" stroke-width="5.90"/><path d="M620.8 700.3C621.6 697.5 624.2 687.3 625.9 683.1C627.7 679.0 629.5 677.0 631.1 675.4C632.7 673.8 634.2 673.2 635.4 673.7C636.5 674.1 637.8 675.3 638.0 678.0C638.1 680.7 636.5 688.0 636.3 690.0" stroke="#2f6b8e" stroke-width="7.08"/><path d="M591.6 700.3C593.9 698.6 600.7 693.2 605.3 690.0C609.9 686.9 615.3 683.3 619.1 681.4C622.8 679.5 625.7 678.8 627.7 678.8C629.7 678.8 630.7 679.5 631.1 681.4C631.5 683.3 630.7 686.9 630.2 690.0C629.8 693.2 628.8 698.6 628.5 700.3" stroke="#dde318" stroke-width="5.31"/><path d="M596.7 700.3C599.3 698.6 608.2 692.4 612.2 690.0C616.2 687.6 618.6 686.3 620.8 685.7C622.9 685.1 624.4 685.3 625.1 686.6C625.8 687.9 625.1 692.3 625.1 693.4" stroke="#1f9e89" stroke-width="3.54"/><path d="M574.4 700.3C576.4 698.6 579.2 696.3 586.4 690.0C593.6 683.7 606.5 672.5 617.3 662.5C628.2 652.5 641.7 639.3 651.7 629.8C661.7 620.4 671.2 611.1 677.5 605.8C683.8 600.5 686.4 599.5 689.5 598.0C692.7 596.6 694.5 596.1 696.4 596.8C698.3 597.6 700.0 599.4 700.7 602.3C701.4 605.3 701.7 607.8 700.7 614.4C699.7 621.0 697.1 632.7 694.7 641.9C692.3 651.0 689.0 661.4 686.1 669.4C683.2 677.4 679.5 684.8 677.5 690.0C675.5 695.2 674.6 698.6 674.1 700.3" stroke="#1f9e89" stroke-width="2.83"/></svg>
<span class="abs" style="left:0;width:82px;text-align:right;top:4.3px;line-height:24px;font-size:13px">sigma</span><div class="abs" style="left:96px;top:13.800000000000011px;width:124px;height:4px;background:#bdbdbd"></div><div class="abs" style="left:114px;top:7.800000000000011px;width:16px;height:16px;border-radius:50%;background:#fff;border:1px solid #9e9e9e"></div><span class="abs" style="left:230px;width:72px;text-align:center;top:4.3px;line-height:24px;font-size:13px">10.00</span>
<span class="abs" style="left:0;width:82px;text-align:right;top:36.3px;line-height:24px;font-size:13px">beta</span><div class="abs" style="left:96px;top:45.80000000000001px;width:124px;height:4px;background:#bdbdbd"></div><div class="abs" style="left:151px;top:39.80000000000001px;width:16px;height:16px;border-radius:50%;background:#fff;border:1px solid #9e9e9e"></div><span class="abs" style="left:230px;width:72px;text-align:center;top:36.3px;line-height:24px;font-size:13px">2.67</span>
<span class="abs" style="left:0;width:82px;text-align:right;top:68.2px;line-height:24px;font-size:13px">rho</span><div class="abs" style="left:96px;top:77.69999999999999px;width:124px;height:4px;background:#bdbdbd"></div><div class="abs" style="left:158px;top:71.69999999999999px;width:16px;height:16px;border-radius:50%;background:#fff;border:1px solid #9e9e9e"></div><span class="abs" style="left:230px;width:72px;text-align:center;top:68.2px;line-height:24px;font-size:13px">28.00</span>
</div>
</div>
<div class="abs tabbar" style="left:487px;top:338px;width:471px;height:25px">
<div class="tab cur" style="left:-1px;width:216px;box-shadow:inset 0 2px 0 #1976d2"><svg style="left:8px;top:5px" width="14" height="14" viewBox="0 0 24 24" fill="#616161"><path d="M15 15H3v2h12v-2zm0-8H3v2h12V7zM3 13h18v-2H3v2zm0 8h18v-2H3v2zM3 3v2h18V3H3z"/></svg><span class="lbl" style="top:1px">lorenz.py</span><svg style="left:auto;right:8px;top:4px" width="16" height="16" viewBox="0 0 24 24"><path d="M5.700 5.700l12.600 12.600m0-12.600L5.700 18.300" stroke="#616161" stroke-width="1.600" fill="none"/></svg></div>
<div class="tab" style="left:214px;width:25px;border-right:none"><svg style="left:3.500px;top:4px" width="16" height="16" viewBox="0 0 24 24" fill="#616161"><path d="M19 13h-6v6h-2v-6H5v-2h6V5h2v6h6v2z"/></svg></div>
</div>
<div class="abs panel" style="left:487px;top:363px;width:471px;height:300px;overflow:hidden">
<div class="abs" style="left:0;top:7px;width:471px;height:1px;background:#bdbdbd"></div>
<div class="abs mono ed" style="left:0;top:8px;width:471px;height:292px;overflow:hidden">
<div class="abs gut"><div>1</div><div>2</div><div>3</div><div>4</div><div>5</div><div>6</div><div>7</div><div>&nbsp;</div><div>8</div><div>9</div><div>10</div><div>11</div><div>12</div><div style="position:relative;top:-1px">13</div><div>14</div><div>15</div></div>
<div class="abs code"><div><b class="k">from</b> matplotlib <b class="k">import</b> pyplot <b class="k">as</b> plt</div><div><b class="k">from</b> mpl_toolkits.mplot3d <b class="k">import</b> Axes3D</div><div><b class="k">import</b> numpy <b class="k">as</b> np</div><div><b class="k">from</b> scipy <b class="k">import</b> integrate</div><div>&nbsp;</div><div><b class="k">def</b> <span class="d">solve_lorenz</span>(sigma<span class="o">=</span><span class="n">10.0</span>, beta<span class="o">=</span><span class="n">8.</span><span class="o">/</span><span class="n">3</span>, rho<span class="o">=</span><span class="n">28.0</span>):</div><div>    <span class="s">&quot;&quot;&quot;Plot a solution to the Lorenz differential</span></div><div><span class="s">equations.&quot;&quot;&quot;</span></div><div>&nbsp;</div><div>    max_time <span class="o">=</span> <span class="n">4.0</span></div><div>    N <span class="o">=</span> <span class="n">30</span></div><div>&nbsp;</div><div>    fig <span class="o">=</span> plt.<span class="p">figure</span>()</div><div style="position:relative;top:-1px">    ax <span class="o">=</span> fig.<span class="p">add_axes</span>(<span class="b">[</span><span class="n">0</span>, <span class="n">0</span>, <span class="n">1</span>, <span class="n">1</span><span class="b">]</span>, projection<span class="o">=</span><span class="s">'3d'</span>)</div><div>    ax.<span class="p">axis</span>(<span class="s">'off'</span>)</div><div>&nbsp;</div></div>
</div>
</div>
</div>
<div id="status" class="abs">
<div class="abs" style="left:73px;top:4px;width:35px;height:16px;border-radius:8px;background:#bdbdbd"><div class="abs" style="left:2px;top:2.500px;width:11px;height:11px;border-radius:50%;background:#fff"></div></div>
<svg style="left:151.500px;top:4.500px" width="18" height="18" viewBox="0 0 24 24"><rect x="2" y="2" width="20" height="20" fill="#3c3c3c"/><text x="4.300" y="16.200" font-family="DejaVu Sans,sans-serif" font-size="12" font-weight="bold" fill="#fff">$_</text></svg>
<svg style="left:195px;top:4px" width="18" height="18" viewBox="0 0 24 24" fill="#616161"><path d="M15 9H9v6h6V9zm-2 4h-2v-2h2v2zm8-2V9h-2V7c0-1.100-.9-2-2-2h-2V3h-2v2h-2V3H9v2H7c-1.100 0-2 .9-2 2v2H3v2h2v2H3v2h2v2c0 1.100.9 2 2 2h2v2h2v-2h2v2h2v-2h2c1.100 0 2-.9 2-2v-2h2v-2h-2v-2h2zm-4 6H7V7h10v10z"/></svg>
<span class="arial" style="left:28px;top:1px">Simple</span>
<span style="left:134px">1</span><span style="left:178px">3</span><span style="left:230.500px">Python</span>
<span style="left:1038px">Ln 1, Col 1</span><span style="left:1123px">Spaces: 4</span><span style="left:1202px">lorenz.py</span>
</div>
</div>
</body>
</html>
